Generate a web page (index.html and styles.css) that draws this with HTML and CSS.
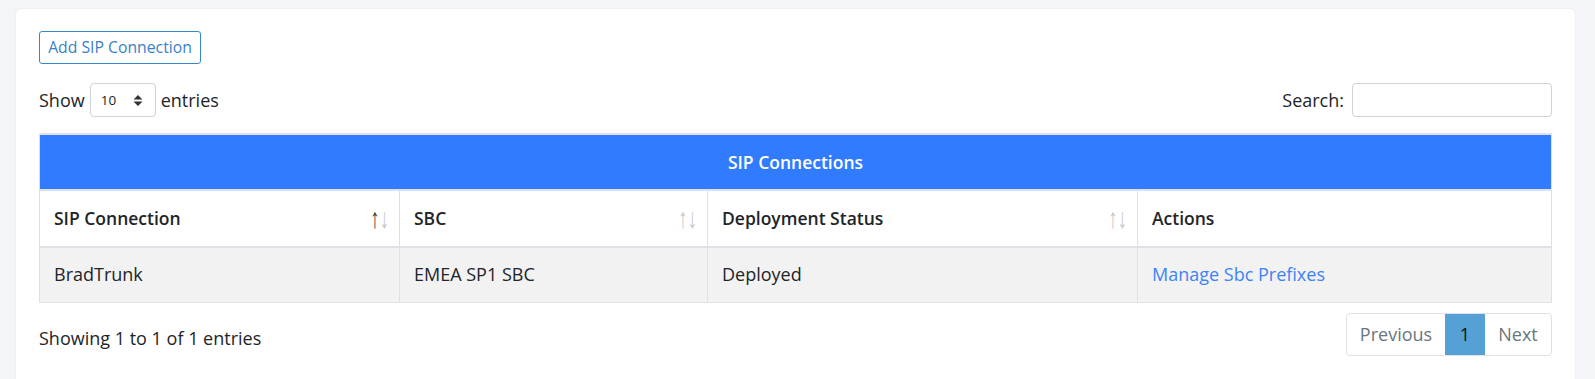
FILE: index.html
```html
<!DOCTYPE html>
<html>
<head>
<meta charset="utf-8">
<link rel="stylesheet" href="styles.css">
</head>
<body>
<div class="card">
  <button class="btn-add">Add SIP Connection</button>
  <div class="controls">
    <div class="length">
      <span>Show</span>
      <div class="select"><span>10</span>
        <svg width="10" height="13" viewBox="0 0 10 13"><path d="M5 1 L9.5 5.5 H0.5 Z M5 12 L9.5 7.5 H0.5 Z" fill="#333"/></svg>
      </div>
      <span>entries</span>
    </div>
    <div class="search">
      <span>Search:</span>
      <div class="input"></div>
    </div>
  </div>
  <table class="tbl">
    <colgroup>
      <col class="c1"><col class="c2"><col class="c3"><col class="c4">
    </colgroup>
    <thead>
      <tr><th colspan="4" class="title">SIP Connections</th></tr>
      <tr class="heads">
        <th><div class="th-in"><span>SIP Connection</span><span class="sort active-up"><i class="up">↑</i><i class="dn">↓</i></span></div></th>
        <th><div class="th-in"><span>SBC</span><span class="sort"><i class="up">↑</i><i class="dn">↓</i></span></div></th>
        <th><div class="th-in"><span>Deployment Status</span><span class="sort"><i class="up">↑</i><i class="dn">↓</i></span></div></th>
        <th><div class="th-in"><span>Actions</span></div></th>
      </tr>
    </thead>
    <tbody>
      <tr>
        <td>BradTrunk</td>
        <td>EMEA SP1 SBC</td>
        <td>Deployed</td>
        <td><a href="#">Manage Sbc Prefixes</a></td>
      </tr>
    </tbody>
  </table>
  <div class="footer">
    <div class="info">Showing 1 to 1 of 1 entries</div>
    <div class="pager">
      <span class="pg prev">Previous</span>
      <span class="pg cur">1</span>
      <span class="pg next">Next</span>
    </div>
  </div>
</div>
</body>
</html>
```
FILE: styles.css
```css
html, body {
  margin: 0;
  height: 100%;
}
body {
  background: #f4f5f9;
  padding: 9px 20px 0 16px;
  box-sizing: border-box;
  font-family: "Open Sans", "Liberation Sans", sans-serif;
  font-size: 18px;
  line-height: 1.5;
  color: #212529;
  overflow: hidden;
}
.card {
  background: #fff;
  border-radius: 5px;
  box-shadow: 0 0 2px rgba(0,0,0,0.08);
  padding: 22px 23px 40px 23px;
}
.btn-add {
  display: block;
  height: 33px;
  width: 162px;
  padding: 0;
  border: 1px solid #3a86cc;
  border-radius: 3px;
  background: #fff;
  color: #3a7fc6;
  font-family: "Open Sans", "Liberation Sans", sans-serif;
  font-size: 15.75px;
  line-height: 31px;
  text-align: center;
}
.controls {
  display: flex;
  justify-content: space-between;
  align-items: center;
  margin-top: 19px;
}
.length {
  display: flex;
  align-items: center;
  gap: 5px;
}
.search {
  display: flex;
  align-items: center;
  gap: 8px;
}
.select {
  width: 66px;
  height: 34px;
  box-sizing: border-box;
  border: 1px solid #ced4da;
  border-radius: 4px;
  display: flex;
  align-items: center;
  justify-content: space-between;
  padding: 0 12px 0 10px;
  font-size: 13.5px;
}
.input {
  width: 200px;
  height: 34px;
  box-sizing: border-box;
  border: 1px solid #ced4da;
  border-radius: 4px;
}
.tbl {
  width: 100%;
  margin-top: 16px;
  border-collapse: collapse;
  table-layout: fixed;
  border: 1px solid #dee2e6;
}
.c1 { width: 360px; }
.c2 { width: 308px; }
.c3 { width: 430px; }
.c4 { width: auto; }
.title {
  background: #307bff;
  color: #fff;
  font-weight: 600;
  font-size: 17.5px;
  text-align: center;
  height: 56px;
  padding: 0;
  border-top: 2px solid #dee2e6;
  border-bottom: 2px solid #dee2e6;
  box-sizing: border-box;
}
.heads th {
  height: 57px;
  padding: 0 10px 0 14px;
  text-align: left;
  font-weight: 600;
  font-size: 17.5px;
  border-left: 1px solid #dee2e6;
  border-right: 1px solid #dee2e6;
  border-bottom: 2px solid #dee2e6;
  box-sizing: border-box;
}
.th-in {
  display: flex;
  justify-content: space-between;
  align-items: center;
}
.sort {
  display: flex;
  gap: 0;
  font-family: "Liberation Sans", sans-serif;
  font-weight: 400;
  font-size: 19px;
  line-height: 1;
}
.sort i {
  display: inline-block;
  font-style: normal;
  color: #c4c6c8;
  transform: scaleY(1.5);
}
.sort.active-up .up { color: #3a3a3a; }
.tbl td {
  background: #f2f2f2;
  height: 55px;
  padding: 0 14px;
  border: 1px solid #dee2e6;
  box-sizing: border-box;
}
.tbl a {
  color: #3d83f6;
  text-decoration: none;
}
.footer {
  display: flex;
  justify-content: space-between;
  align-items: flex-start;
  margin-top: 10px;
}
.info {
  padding-top: 12px;
}
.pager {
  display: flex;
  border: 1px solid #dee2e6;
  border-radius: 4px;
  height: 43px;
  box-sizing: border-box;
  overflow: hidden;
}
.pg {
  display: flex;
  align-items: center;
  justify-content: center;
  color: #6c757d;
}
.prev { width: 98px; }
.cur { width: 40px; background: #55a1d5; color: #111; }
.next { width: 66px; }
```
